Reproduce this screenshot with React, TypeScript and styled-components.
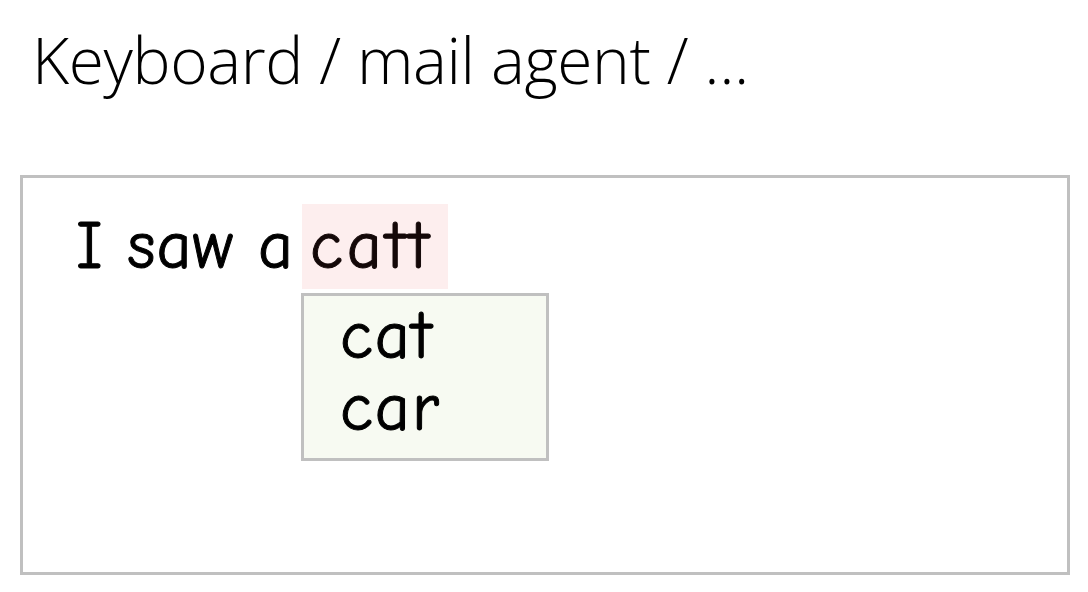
import React from "react";
import styled, { createGlobalStyle } from "styled-components";

const Global = createGlobalStyle`
  html, body { margin: 0; padding: 0; background: #ffffff; }
  body { font-family: "Open Sans", "Liberation Sans", sans-serif; }
`;

const Page = styled.div`
  width: 1088px;
  height: 592px;
  box-sizing: border-box;
  padding: 20px 18px 17px 20px;
  display: flex;
  flex-direction: column;
`;

const Title = styled.h1`
  margin: 0 0 0 12px;
  height: 155px;
  font-family: "Open Sans", "Liberation Sans", sans-serif;
  font-weight: 300;
  font-size: 64px;
  line-height: 80px;
  color: #000;
  letter-spacing: -0.4px;
`;

const Editor = styled.div`
  width: 1050px;
  height: 400px;
  box-sizing: border-box;
  border: 3px solid #c0c0c0;
  padding: 26px 0 0 53px;
`;

const Line = styled.div`
  display: flex;
  align-items: flex-start;
  font-family: "Comic Sans MS", "Comic Neue", "Lato", sans-serif;
  font-weight: 400;
  -webkit-text-stroke: 1px currentColor;
  font-variant-ligatures: none;
  font-feature-settings: "liga" 0, "calt" 0, "clig" 0, "dlig" 0;
  font-size: 68px;
  letter-spacing: 1px;
  line-height: 85px;
  color: #000;
`;

const Plain = styled.span`
  white-space: pre;
  padding-right: 8px;
`;

const Misspelled = styled.span`
  position: relative;
  display: inline-block;
  height: 85px;
  box-sizing: border-box;
  padding: 0 15px 0 8px;
  letter-spacing: 4px;
  background: #fdeeee;
  color: #140808;
`;

const Suggestions = styled.ul`
  position: absolute;
  top: 89px;
  left: -1px;
  width: 248px;
  height: 168px;
  box-sizing: border-box;
  margin: 0;
  padding: 4px 0 0 36px;
  list-style: none;
  border: 3px solid #c0c0c0;
  background: #f7faf2;
  color: #000;
  letter-spacing: 2px;
`;

const Suggestion = styled.li`
  line-height: 72px;
`;

export default function App() {
  return (
    <>
      <Global />
      <Page>
        <Title>Keyboard / mail agent / ...</Title>
        <Editor>
          <Line>
            <Plain>I saw a</Plain>
            <Misspelled>
              catt
              <Suggestions>
                <Suggestion>cat</Suggestion>
                <Suggestion>car</Suggestion>
              </Suggestions>
            </Misspelled>
          </Line>
        </Editor>
      </Page>
    </>
  );
}
